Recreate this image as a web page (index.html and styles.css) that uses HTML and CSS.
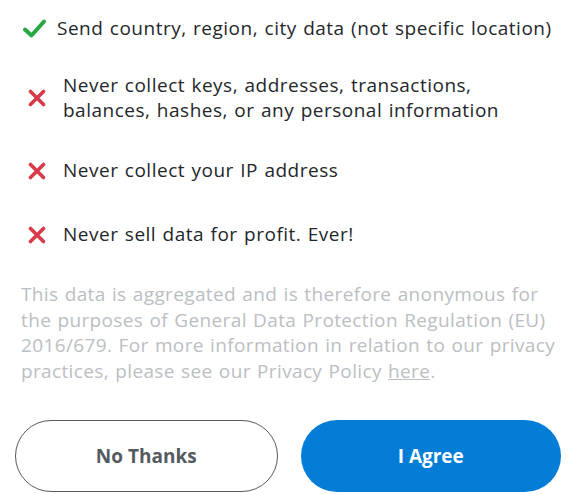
FILE: index.html
```html
<!DOCTYPE html>
<html>
<head>
<meta charset="utf-8">
<link rel="stylesheet" href="styles.css">
</head>
<body>
<div class="page">
  <ul class="items">
    <li class="item item-yes">
      <span class="icon">
        <svg width="23" height="19" viewBox="0 0 23 19"><path d="M2 10.5 L8.5 16.5 L21 2.5" fill="none" stroke="#28a745" stroke-width="4" stroke-linecap="round" stroke-linejoin="round"/></svg>
      </span>
      <span class="text">Send country, region, city data (not specific location)</span>
    </li>
    <li class="item item-no">
      <span class="icon">
        <svg width="18" height="18" viewBox="0 0 18 18"><path d="M2.5 2.5 L15.5 15.5 M15.5 2.5 L2.5 15.5" fill="none" stroke="#d73a49" stroke-width="3.6" stroke-linecap="round"/></svg>
      </span>
      <span class="text">Never collect keys, addresses, transactions, balances, hashes, or any personal information</span>
    </li>
    <li class="item item-no">
      <span class="icon">
        <svg width="18" height="18" viewBox="0 0 18 18"><path d="M2.5 2.5 L15.5 15.5 M15.5 2.5 L2.5 15.5" fill="none" stroke="#d73a49" stroke-width="3.6" stroke-linecap="round"/></svg>
      </span>
      <span class="text">Never collect your IP address</span>
    </li>
    <li class="item item-no">
      <span class="icon">
        <svg width="18" height="18" viewBox="0 0 18 18"><path d="M2.5 2.5 L15.5 15.5 M15.5 2.5 L2.5 15.5" fill="none" stroke="#d73a49" stroke-width="3.6" stroke-linecap="round"/></svg>
      </span>
      <span class="text">Never sell data for profit. Ever!</span>
    </li>
  </ul>
  <p class="note">This data is aggregated and is therefore anonymous for the purposes of General Data Protection Regulation (EU) 2016/679. For more information in relation to our privacy practices, please see our Privacy Policy <a class="link" href="#">here</a>.</p>
  <div class="actions">
    <button class="btn btn-secondary">No Thanks</button>
    <button class="btn btn-primary">I Agree</button>
  </div>
</div>
</body>
</html>
```

FILE: styles.css
```css
html, body {
  margin: 0;
  padding: 0;
  background: #ffffff;
}
body {
  font-family: "Open Sans", "Noto Sans", sans-serif;
  color: #24272a;
}
.page {
  width: 574px;
  height: 494px;
  overflow: hidden;
  box-sizing: border-box;
  padding: 16px 13px 0 15px;
}
.items {
  list-style: none;
  margin: 0;
  padding: 0;
  display: flex;
  flex-direction: column;
  gap: 35px;
}
.item {
  display: flex;
  align-items: center;
  font-size: 19px;
  line-height: 25px;
  letter-spacing: 0.5px;
  word-spacing: 1px;
}
.item-yes {
  margin-bottom: -3px;
}
.item:last-child {
  margin-top: 4px;
}
.icon {
  flex-shrink: 0;
  box-sizing: border-box;
}
.item-yes .icon {
  width: 42px;
  padding-left: 8px;
}
.item-no .icon {
  width: 48px;
  padding-left: 13px;
}
.item-no .text {
  max-width: 450px;
}
.icon svg {
  display: block;
}
.note {
  margin: 35px 0 0 6px;
  font-size: 19px;
  line-height: 25.5px;
  letter-spacing: 0.36px;
  word-spacing: 1px;
  color: #bbbec2;
}
.link {
  color: #bbbec2;
  text-decoration: underline;
}
.actions {
  display: flex;
  gap: 23px;
  margin-top: 36px;
}
.btn {
  height: 72px;
  border-radius: 36px;
  font-family: inherit;
  font-size: 19px;
  font-weight: 700;
  cursor: pointer;
}
.btn-secondary {
  width: 263px;
  background: #ffffff;
  border: 1.5px solid #535a61;
  color: #535a61;
}
.btn-primary {
  width: 261px;
  background: #037dd6;
  border: none;
  color: #ffffff;
}
```
